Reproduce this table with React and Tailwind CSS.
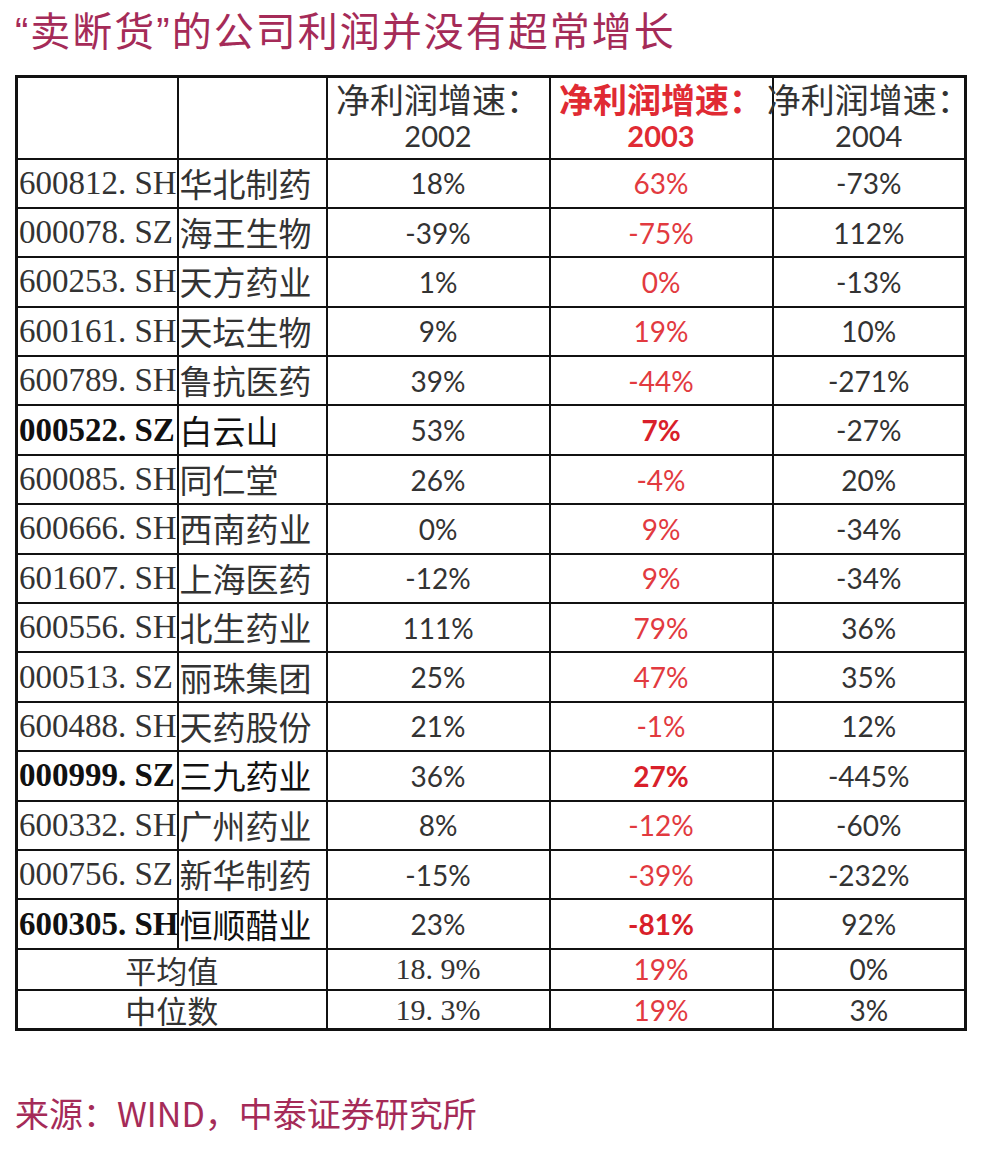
const rows = [
  ['600812. SH', '华北制药', '18%', '63%', '-73%'],
  ['000078. SZ', '海王生物', '-39%', '-75%', '112%'],
  ['600253. SH', '天方药业', '1%', '0%', '-13%'],
  ['600161. SH', '天坛生物', '9%', '19%', '10%'],
  ['600789. SH', '鲁抗医药', '39%', '-44%', '-271%'],
  ['000522. SZ', '白云山', '53%', '7%', '-27%', true],
  ['600085. SH', '同仁堂', '26%', '-4%', '20%'],
  ['600666. SH', '西南药业', '0%', '9%', '-34%'],
  ['601607. SH', '上海医药', '-12%', '9%', '-34%'],
  ['600556. SH', '北生药业', '111%', '79%', '36%'],
  ['000513. SZ', '丽珠集团', '25%', '47%', '35%'],
  ['600488. SH', '天药股份', '21%', '-1%', '12%'],
  ['000999. SZ', '三九药业', '36%', '27%', '-445%', true],
  ['600332. SH', '广州药业', '8%', '-12%', '-60%'],
  ['000756. SZ', '新华制药', '-15%', '-39%', '-232%'],
  ['600305. SH', '恒顺醋业', '23%', '-81%', '92%', true],
];

const cell = "border-2 border-[#111] p-0";
const num = "font-['Lato','Noto_Sans_CJK_SC',sans-serif] text-[28px] text-center leading-none";

export default function App() {
  return (
    <div className="w-[1006px] h-[1152px] bg-white pt-[9px] pl-[15px] overflow-hidden">
      {/* title */}
      <h1 className="h-[40px] overflow-visible whitespace-nowrap font-['Noto_Sans_CJK_SC',sans-serif] text-[40px] leading-[40px] tracking-[2px] text-[#a52b58]">
        <span className="font-['Liberation_Sans',sans-serif] leading-none">“</span>卖断货<span className="font-['Liberation_Sans',sans-serif] leading-none">”</span>的公司利润并没有超常增长
      </h1>

      <table className="mt-[26px] table-fixed border-collapse border-[3px] border-[#111] text-[#333] w-[949px]">
        <colgroup>
          <col className="w-[161px]" />
          <col className="w-[149px]" />
          <col className="w-[223px]" />
          <col className="w-[223px]" />
          <col className="w-[193px]" />
        </colgroup>
        <thead>
          <tr className="h-[82px]">
            <th className={cell}></th>
            <th className={cell}></th>
            <HeaderCell year="2002" />
            <HeaderCell year="2003" red />
            <HeaderCell year="2004" />
          </tr>
        </thead>
        <tbody>
          {rows.map(([code, name, a, b, c, bold]) => (
            <tr key={code} className="h-[49.4px]">
              <td className={cell}>
                <span className={`block whitespace-nowrap pl-[1px] font-['Liberation_Serif',serif] text-[33px] leading-none ${bold ? 'font-bold text-[#111]' : ''}`}>
                  {code}
                </span>
              </td>
              <td className={cell}>
                <span className={`block whitespace-nowrap pl-[1px] font-['Noto_Sans_CJK_SC',sans-serif] text-[33px] leading-none ${bold ? 'text-[#111]' : ''}`}>
                  {name}
                </span>
              </td>
              <td className={`${cell} ${num}`}>{a}</td>
              <td className={`${cell} ${num} ${bold ? 'font-bold text-[#d91f2a]' : 'text-[#e23a3f]'}`}>{b}</td>
              <td className={`${cell} ${num}`}>{c}</td>
            </tr>
          ))}
          <SummaryRow label="平均值" a="18. 9%" b="19%" c="0%" h="h-[41px]" />
          <SummaryRow label="中位数" a="19. 3%" b="19%" c="3%" h="h-[40px]" />
        </tbody>
      </table>

      {/* source */}
      <p className="mt-[63px] font-['Noto_Sans_CJK_SC',sans-serif] text-[34px] leading-[38px] text-[#a52b58]">
        来源：WIND，中泰证券研究所
      </p>
    </div>
  );
}

function HeaderCell({ year, red }) {
  return (
    <th className={`${cell} ${red ? 'text-[#e02a33] font-bold' : 'font-normal'}`}>
      <div className="flex flex-col items-center pb-[2px]">
        <span className="whitespace-nowrap font-['Noto_Sans_CJK_SC',sans-serif] text-[34px] leading-[38px]">净利润增速：</span>
        <span className="font-['Lato',sans-serif] text-[29px] leading-[36px]">{year}</span>
      </div>
    </th>
  );
}

function SummaryRow({ label, a, b, c, h }) {
  return (
    <tr className={h}>
      <td colSpan={2} className={`${cell} text-center font-['Noto_Sans_CJK_SC',sans-serif] text-[31px] leading-none`}>{label}</td>
      <td className={`${cell} text-center font-['Liberation_Serif',serif] text-[30px] leading-none`}>{a}</td>
      <td className={`${cell} ${num} text-[#e23a3f]`}>{b}</td>
      <td className={`${cell} ${num}`}>{c}</td>
    </tr>
  );
}
